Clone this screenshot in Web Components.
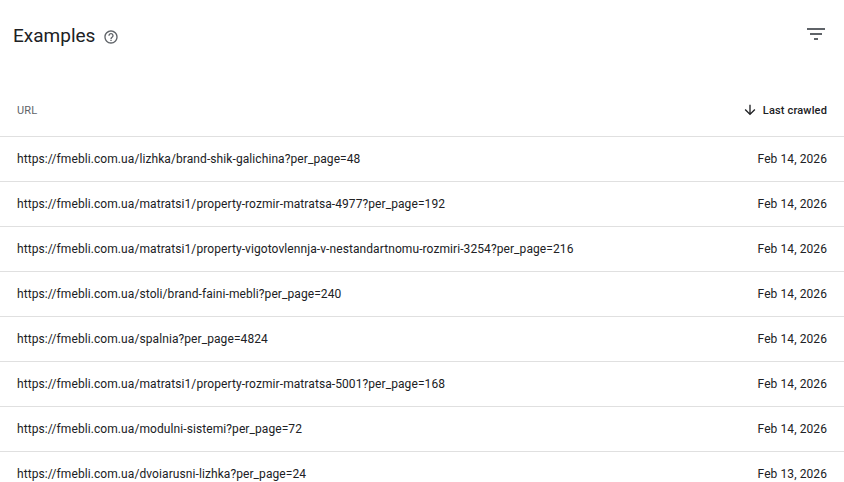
<!DOCTYPE html>
<html>
<head>
<meta charset="utf-8">
<title>Examples</title>
<style>
    html, body {
        margin: 0;
        height: 100%;
        overflow: hidden;
        background: #fff;
    }

    body {
        font-family: Roboto, "Liberation Sans", sans-serif;
        color: #202124;
    }
</style>
</head>
<body>
<examples-card>
    <examples-row url="https://fmebli.com.ua/lizhka/brand-shik-galichina?per_page=48" date="Feb 14, 2026"></examples-row>
    <examples-row url="https://fmebli.com.ua/matratsi1/property-rozmir-matratsa-4977?per_page=192" date="Feb 14, 2026"></examples-row>
    <examples-row url="https://fmebli.com.ua/matratsi1/property-vigotovlennja-v-nestandartnomu-rozmiri-3254?per_page=216" date="Feb 14, 2026"></examples-row>
    <examples-row url="https://fmebli.com.ua/stoli/brand-faini-mebli?per_page=240" date="Feb 14, 2026"></examples-row>
    <examples-row url="https://fmebli.com.ua/spalnia?per_page=4824" date="Feb 14, 2026"></examples-row>
    <examples-row url="https://fmebli.com.ua/matratsi1/property-rozmir-matratsa-5001?per_page=168" date="Feb 14, 2026"></examples-row>
    <examples-row url="https://fmebli.com.ua/modulni-sistemi?per_page=72" date="Feb 14, 2026"></examples-row>
    <examples-row url="https://fmebli.com.ua/dvoiarusni-lizhka?per_page=24" date="Feb 13, 2026"></examples-row>
</examples-card>

<template id="card-tmpl">
    <style>
        :host {
            display: block;
        }

        .head {
            display: flex;
            align-items: center;
            height: 72px;
            padding: 0 16px 0 13px;
        }

        .head__title {
            font-size: 19px;
            line-height: 24px;
            color: #202124;
        }

        .head__help {
            display: block;
            margin-left: 8px;
            margin-top: 1px;
        }

        .head__filter {
            display: block;
            margin-left: auto;
            margin-top: -4px;
        }

        .cols {
            display: flex;
            align-items: center;
            justify-content: space-between;
            height: 64px;
            padding: 12px 17px 0;
            font-size: 11px;
            font-weight: 500;
            letter-spacing: .15px;
            box-sizing: border-box;
        }

        .cols__url {
            color: #5f6368;
            font-weight: 400;
        }

        .cols__sort {
            display: flex;
            align-items: center;
            gap: 5px;
            color: #202124;
        }
    </style>
    <div class="head">
        <span class="head__title">Examples</span>
        <svg class="head__help" width="16" height="16" viewBox="0 0 24 24" fill="#5f6368">
            <path d="M11 18h2v-2h-2v2zm1-16C6.48 2 2 6.48 2 12s4.48 10 10 10 10-4.48 10-10S17.52 2 12 2zm0 18c-4.41 0-8-3.59-8-8s3.59-8 8-8 8 3.59 8 8-3.59 8-8 8zm0-14c-2.21 0-4 1.79-4 4h2c0-1.1.9-2 2-2s2 .9 2 2c0 2-3 1.75-3 5h2c0-2.25 3-2.5 3-5 0-2.21-1.79-4-4-4z"/>
        </svg>
        <svg class="head__filter" width="24" height="24" viewBox="0 0 24 24" fill="#5f6368">
            <path d="M10 18h4v-2h-4v2zM3 6v2h18V6H3zm3 7h12v-2H6v2z"/>
        </svg>
    </div>
    <div class="cols">
        <span class="cols__url">URL</span>
        <span class="cols__sort">
            <svg width="16" height="16" viewBox="0 0 24 24" fill="#202124">
                <path d="M20 12l-1.41-1.41L13 16.17V4h-2v12.17l-5.58-5.59L4 12l8 8 8-8z"/>
            </svg>
            Last crawled
        </span>
    </div>
    <slot></slot>
</template>

<template id="row-tmpl">
    <style>
        :host {
            display: flex;
            align-items: center;
            justify-content: space-between;
            height: 45px;
            padding: 0 17px;
            box-sizing: border-box;
            border-top: 1px solid #e0e0e0;
            font-size: 12px;
            letter-spacing: .085px;
            color: #202124;
        }
    </style>
    <span class="url"></span>
    <span class="date"></span>
</template>

<script>
    class ExamplesCard extends HTMLElement {
        connectedCallback() {
            this.attachShadow({ mode: 'open' });
            this.shadowRoot.append(document.getElementById('card-tmpl').content.cloneNode(true));
        }
    }

    class ExamplesRow extends HTMLElement {
        connectedCallback() {
            this.attachShadow({ mode: 'open' });
            this.shadowRoot.append(document.getElementById('row-tmpl').content.cloneNode(true));
            this.shadowRoot.querySelector('.url').textContent = this.getAttribute('url');
            this.shadowRoot.querySelector('.date').textContent = this.getAttribute('date');
        }
    }

    customElements.define('examples-card', ExamplesCard);
    customElements.define('examples-row', ExamplesRow);
</script>
</body>
</html>
